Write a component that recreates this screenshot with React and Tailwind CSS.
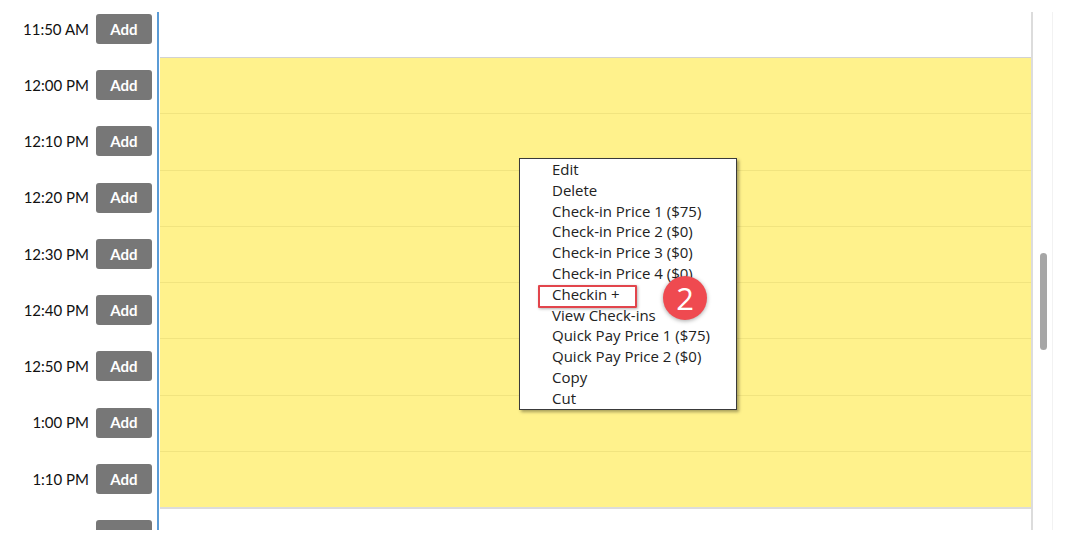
import React from "react";

const slots = [
  { time: "11:50 AM", event: false },
  { time: "12:00 PM", event: true },
  { time: "12:10 PM", event: true },
  { time: "12:20 PM", event: true },
  { time: "12:30 PM", event: true },
  { time: "12:40 PM", event: true },
  { time: "12:50 PM", event: true },
  { time: "1:00 PM", event: true },
  { time: "1:10 PM", event: true },
  // last slot is scrolled mostly out of view, only the button top shows
  { time: "", event: false },
];

const menuItems = [
  "Edit",
  "Delete",
  "Check-in Price 1 ($75)",
  "Check-in Price 2 ($0)",
  "Check-in Price 3 ($0)",
  "Check-in Price 4 ($0)",
  "Checkin +",
  "View Check-ins",
  "Quick Pay Price 1 ($75)",
  "Quick Pay Price 2 ($0)",
  "Copy",
  "Cut",
];

function TimeColumn() {
  return (
    <div className="w-[157px] shrink-0">
      {slots.map((s, i) => (
        <div
          key={i}
          className="h-[56.25px] flex items-center justify-end gap-[7px] pr-[5px]"
        >
          <span className="text-[15px] text-[#111] font-['Lato',sans-serif]">
            {s.time}
          </span>
          <button className="w-[56px] h-[30px] rounded-[3px] bg-[#777777] text-white text-[15px] font-bold font-['Lato',sans-serif]">
            {s.time ? "Add" : ""}
          </button>
        </div>
      ))}
    </div>
  );
}

function DayColumn() {
  return (
    <div className="flex-1 pl-px">
      {slots.map((s, i) => {
        const prev = slots[i - 1];
        let cls = "h-[56.25px] ";
        if (s.event) {
          cls += "bg-[#fff28c] ";
          cls += prev && prev.event ? "border-t border-[#f1e47f]" : "border-t border-[#d2d2d2]";
        } else if (prev && prev.event) {
          cls += "bg-white border-t-[2px] border-[#dcdcdc]";
        } else {
          cls += "bg-white";
        }
        return <div key={i} className={cls} />;
      })}
    </div>
  );
}

function ContextMenu() {
  return (
    <div className="absolute left-[519px] top-[158px] w-[218px] bg-white border border-[#3a3a3a] shadow-[2px_2px_3px_rgba(0,0,0,0.35)] font-['Open_Sans',sans-serif] text-[15px] text-[#222]">
      {menuItems.map((m) => (
        <div key={m} className="h-[20.8px] leading-[20.8px] pl-[32px] whitespace-nowrap">
          {m}
        </div>
      ))}
    </div>
  );
}

export default function App() {
  return (
    <div className="relative w-[1072px] h-[547px] bg-white overflow-hidden">
      <div className="flex pt-[12px]">
        {/* calendar viewport */}
        <div className="w-[1033px] h-[518px] overflow-hidden">
          <div className="flex -mt-[11.25px]">
            <TimeColumn />
            <div className="w-[2px] shrink-0 bg-[#5b9bd5] mt-[11.25px] h-[600px]" />
            <DayColumn />
            <div className="w-[2px] shrink-0 bg-[#dcdcdc]" />
          </div>
        </div>

        {/* scrollbar */}
        <div className="w-[20px] h-[518px] border-r border-[#f2f2f2] pt-[241px] pl-[7px]">
          <div className="w-[7px] h-[97px] rounded-full bg-[#a6a6a6]" />
        </div>
      </div>

      <ContextMenu />

      {/* highlight + step badge */}
      <div className="absolute left-[538px] top-[285px] w-[99px] h-[23px] border-[2.5px] border-[#e2454c] rounded-[1px] shadow-[1px_1px_3px_rgba(0,0,0,0.3)]" />
      <div className="absolute left-[663px] top-[276px] w-[44px] h-[44px] rounded-full bg-[#ef4a50] shadow-[0_1px_4px_rgba(0,0,0,0.35)] flex items-center justify-center text-white text-[31px] font-['Open_Sans',sans-serif] leading-none">
        2
      </div>
    </div>
  );
}
